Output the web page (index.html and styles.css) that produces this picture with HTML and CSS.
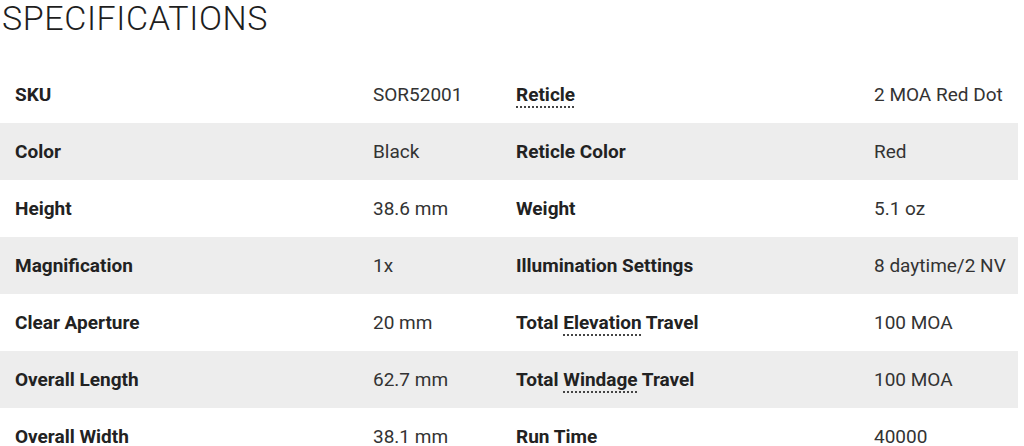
FILE: index.html
```html
<!DOCTYPE html>
<html>
<head>
<meta charset="utf-8">
<link rel="stylesheet" href="styles.css">
</head>
<body>
<h2 class="title">SPECIFICATIONS</h2>
<div class="specs">
  <div class="row">
    <div class="label">SKU</div><div class="value">SOR52001</div>
    <div class="label"><span class="term">Reticle</span></div><div class="value">2 MOA Red Dot</div>
  </div>
  <div class="row alt">
    <div class="label">Color</div><div class="value">Black</div>
    <div class="label">Reticle Color</div><div class="value">Red</div>
  </div>
  <div class="row">
    <div class="label">Height</div><div class="value">38.6 mm</div>
    <div class="label">Weight</div><div class="value">5.1 oz</div>
  </div>
  <div class="row alt">
    <div class="label">Magnification</div><div class="value">1x</div>
    <div class="label">Illumination Settings</div><div class="value">8 daytime/2 NV</div>
  </div>
  <div class="row">
    <div class="label">Clear Aperture</div><div class="value">20 mm</div>
    <div class="label">Total <span class="term">Elevation</span> Travel</div><div class="value">100 MOA</div>
  </div>
  <div class="row alt">
    <div class="label">Overall Length</div><div class="value">62.7 mm</div>
    <div class="label">Total <span class="term">Windage</span> Travel</div><div class="value">100 MOA</div>
  </div>
  <div class="row">
    <div class="label">Overall Width</div><div class="value">38.1 mm</div>
    <div class="label">Run Time</div><div class="value">40000</div>
  </div>
</div>
</body>
</html>
```
FILE: styles.css
```css
html, body {
  margin: 0;
  padding: 0;
  background: #fff;
  overflow: hidden;
}
body {
  font-family: "Roboto", "Liberation Sans", sans-serif;
  color: #222;
}
.title {
  margin: 0;
  padding: 0 0 0 2px;
  height: 66px;
  font-family: "Roboto", sans-serif;
  font-weight: 300;
  font-size: 34px;
  line-height: 36px;
  letter-spacing: 0.6px;
  color: #1e1e1e;
}
.specs {
  width: 1018px;
}
.row {
  display: grid;
  grid-template-columns: 373px 128px 373px 1fr;
  height: 57px;
  align-items: center;
}
.row.alt {
  background: #ededed;
}
.label {
  padding-left: 15px;
  font-weight: 700;
  font-size: 19px;
  color: #222;
}
.value {
  font-size: 19px;
  color: #333;
}
.term {
  text-decoration: underline dotted #444;
  text-decoration-thickness: 2px;
  text-underline-offset: 5px;
}
```
